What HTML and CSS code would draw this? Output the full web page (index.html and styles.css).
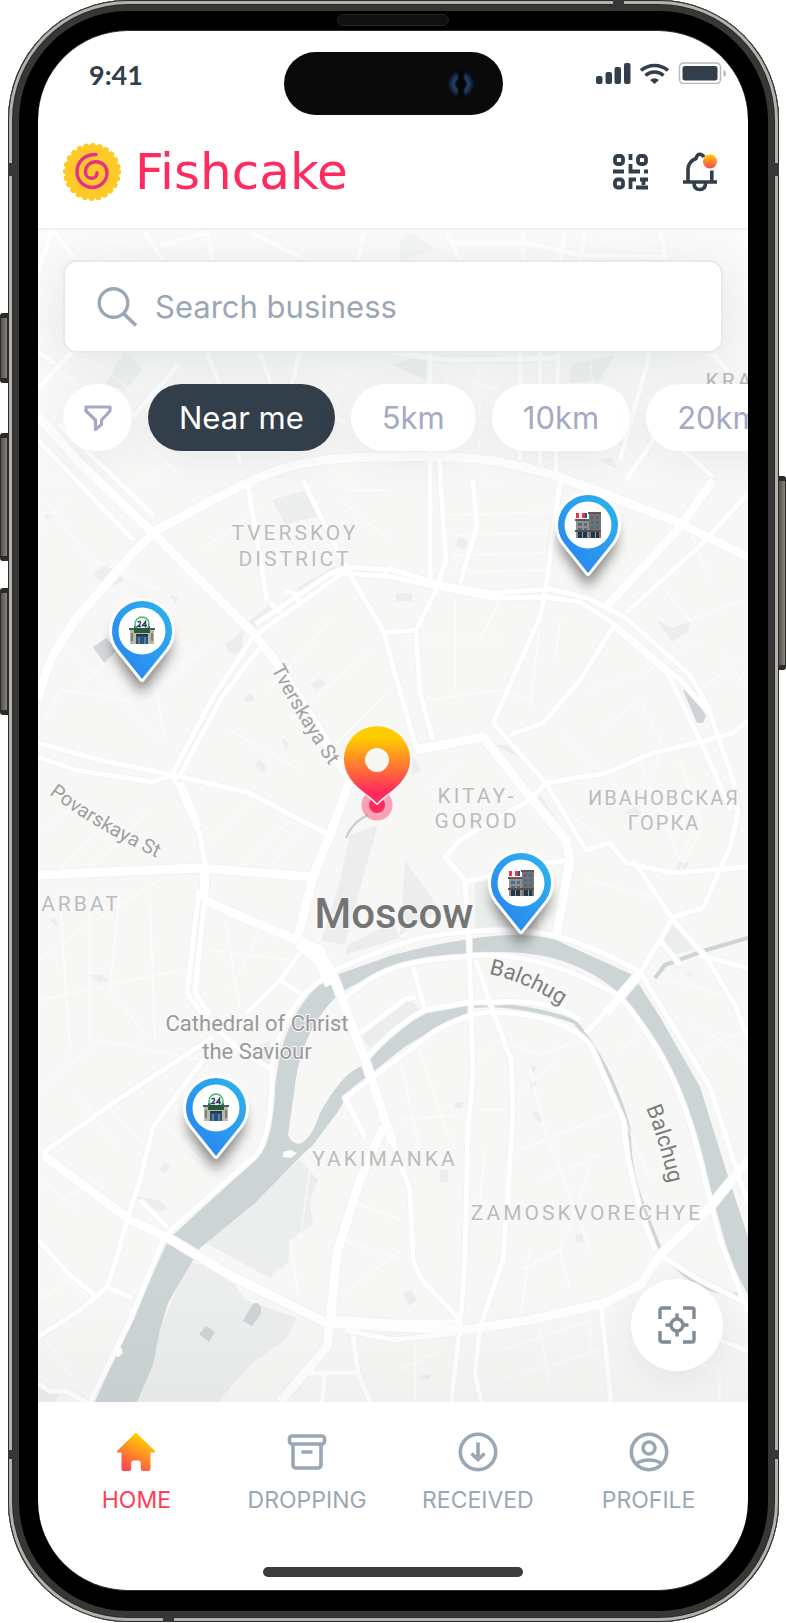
FILE: index.html
```html
<!DOCTYPE html>
<html lang="en">
<head>
<meta charset="utf-8">
<meta name="viewport" content="width=device-width, initial-scale=1">
<title>Fishcake</title>
<link rel="stylesheet" href="styles.css">
</head>
<body>
<svg class="defs" aria-hidden="true">
  <defs>
    <linearGradient id="blue" x1="1" y1="0.2" x2="0.3" y2="1"><stop offset="0" stop-color="#2bb0ee"/><stop offset="1" stop-color="#2a86f0"/></linearGradient>
    <linearGradient id="warm" x1="0" y1="0" x2="0" y2="1"><stop offset="0.15" stop-color="#ffcc00"/><stop offset="0.85" stop-color="#ff2b5e"/></linearGradient>
    <linearGradient id="warm-dot" x1="0" y1="0" x2="0" y2="1"><stop offset="0" stop-color="#ffcc00"/><stop offset="1" stop-color="#ff4458"/></linearGradient>
    <linearGradient id="warm-diagonal" x1="0.7" y1="0" x2="0.2" y2="1"><stop offset="0.1" stop-color="#ffcf00"/><stop offset="1" stop-color="#ff3d55"/></linearGradient>
    <linearGradient id="map-fade" x1="0" y1="0" x2="0" y2="1"><stop offset="0" stop-color="#fff" stop-opacity="0.5"/><stop offset="0.25" stop-color="#fff" stop-opacity="0"/><stop offset="0.9" stop-color="#000" stop-opacity="0"/><stop offset="1" stop-color="#000" stop-opacity="0.025"/></linearGradient>
    <filter id="soft" x="-50%" y="-50%" width="200%" height="200%"><feGaussianBlur stdDeviation="7"/></filter>
    <symbol id="pin" viewBox="0 0 76 110" overflow="visible">
      <path d="M38 98 14 64a28 28 0 1 1 48 0Z" fill="#000" opacity=".5" filter="url(#soft)"/>
      <path d="M38 84 14 54A30 30 0 1 1 62 54Z" fill="#fff" stroke="#fff" stroke-width="6" stroke-linejoin="round"/>
      <path d="M38 84 14 54A30 30 0 1 1 62 54Z" fill="url(#blue)"/>
      <circle cx="38" cy="36" r="23.5" fill="#fff"/>
    </symbol>
    <symbol id="hotel" viewBox="0 0 26 27">
      <path d="M1 8h13v19H1z" fill="#948e8c"/><path d="M14 1h12v26H14z" fill="#777170"/><path d="M13 1h13v2H13zM0 8h14v2H0z" fill="#5e5755"/>
      <path d="M1 2h3v5H1zM7 2h3v5H7z" fill="#ee3347"/><path d="M4 2h3v5H4z" fill="#e4edf8"/><path d="M10 2h2v5h-2z" fill="#294f9d"/>
      <path d="M3 12h4v3H3zM9 12h3v3H9zM3 17h4v2H3zM9 17h3v2H9zM16 5h3v3h-3zM21 5h3v3h-3zM16 10h3v3h-3zM21 10h3v3h-3zM16 15h3v3h-3zM21 15h3v3h-3z" fill="#456e88"/>
      <path d="M3 21h9v6H3zM16 21h8v6h-8z" fill="#233846"/><path d="M7 21h1v6H7zM20 21h1v6h-1z" fill="#78a6bd"/><path d="M0 19h26v2H0z" fill="#5c504e"/>
    </symbol>
    <symbol id="shop" viewBox="0 0 26 28">
      <path d="M5 16V11q1-3 3-4h10q2 1 3 4v5z" fill="#24583b"/><circle cx="13" cy="8" r="7" fill="#eef6f2" stroke="#43bb72" stroke-width="1.4"/>
      <path d="M8.500 6q3-1.500 3 .5T8.500 10.500h3.500M16.500 11.500V5.500L13.500 9.500H18" fill="none" stroke="#354062" stroke-width="1.400"/>
      <path d="M1 13h24v15H1z" fill="#b9b9a4"/><path d="M5 12h16v5H5z" fill="#255b3c"/><path d="M0 12h6v2H0zM20 12h6v2h-6z" fill="#4c5870"/>
      <path d="M7 20h12v8H7z" fill="#2c5079"/><path d="M7 18h12v2H7z" fill="#27335a"/><path d="M10 21v7M16 21v7" stroke="#6b94b0" stroke-width="1.4"/><path d="M3 17v8M23 17v8" stroke="#7c8180" stroke-width="2"/>
    </symbol>
  </defs>
</svg>

<div class="phone">
  <span class="side-key key-action"></span><span class="side-key key-up"></span><span class="side-key key-down"></span><span class="side-key key-power"></span>
  <span class="antenna ant-top"></span><span class="antenna ant-bottom"></span>
  <span class="antenna ant-side ant-lt"></span><span class="antenna ant-side ant-rt"></span><span class="antenna ant-side ant-lb"></span><span class="antenna ant-side ant-rb"></span>
  <span class="speaker"></span>

  <div class="screen">
    <div class="status">
      <time class="clock">9:41</time>
      <div class="island"><span class="camera"></span></div>
      <svg class="signals" viewBox="0 0 131 22" role="img" aria-label="Signal, Wi-Fi and battery">
        <g fill="#323e4a"><rect x="0" y="14" width="6.500" height="8" rx="2"/><rect x="9.500" y="10" width="6.500" height="12" rx="2"/><rect x="18.500" y="5" width="6.500" height="17" rx="2"/><rect x="28" y="1" width="6.500" height="21" rx="2"/></g>
        <g fill="none" stroke="#323e4a" stroke-width="3.600"><path d="M45 8.500a20.500 20.500 0 0 1 27 0"/><path d="M49.500 13.500a13.500 13.500 0 0 1 18 0"/></g><path d="M54 18a7 7 0 0 1 9 0l-4.500 4z" fill="#323e4a"/>
        <rect x="83.500" y="1" width="41" height="20.500" rx="4" fill="none" stroke="#b4b9bf" stroke-width="1.500"/><rect x="86.500" y="4" width="35" height="14.500" rx="2.500" fill="#323e4a"/><path d="M127.500 8c3.500 1 3.500 6 0 7z" fill="#b4b9bf"/>
      </svg>
    </div>

    <header class="header">
      <a class="brand" href="#">
        <svg class="logo" viewBox="0 0 60 60" aria-hidden="true"><circle cx="30" cy="30" r="27" fill="#ffca28"/><circle cx="30" cy="30" r="26.300" fill="none" stroke="#ffca28" stroke-width="5.600" stroke-linecap="round" stroke-dasharray="0.01 6.885"/><path d="M34 12.500C22 12.500 15 20 15 30a15.500 15.500 0 0 0 15 15.500C38 45.500 45 39 45 31c0-7-5-11.300-11-11.300S23.500 24 23.500 30c0 4 2.500 6.300 6 6.300S35 34 35 30.700" fill="none" stroke="#e4308a" stroke-width="3.400" stroke-linecap="round"/></svg>
        <span>Fishcake</span>
      </a>
      <div class="actions">
        <button class="icon-button" type="button" aria-label="Scan code"><svg width="36" height="36" viewBox="0 0 36 36" fill="none" stroke="#323e4a" stroke-width="3.800"><rect x="2" y="2" width="8" height="8" rx="2.500"/><rect x="25" y="2" width="8" height="8" rx="2.500"/><rect x="2" y="25.500" width="8" height="8" rx="2.500"/><path d="M17.500 0v6M17.500 10v7.500H27M0 17.500h11M31 17.500h4M17.500 35V25.500h5.500M27 25.500h8M30.500 27v4M23 33.500h12"/></svg></button>
        <button class="icon-button" type="button" aria-label="Notifications"><svg width="36" height="40" viewBox="0 0 36 40"><path d="M1 30h34M6 30V17Q6.500 9.500 14 6.500Q15 2.200 17.700 2.200T22 5M29.800 18.500V30M12 31c0 4 2 6.500 5.700 6.500S23.500 35 23.500 31" fill="none" stroke="#323e4a" stroke-width="3.600"/><circle cx="28" cy="9.500" r="7" fill="url(#warm-dot)"/></svg></button>
      </div>
    </header>

    <main class="map">
      <svg class="map-art" viewBox="38 230 710 1172" preserveAspectRatio="xMidYMid slice" role="img" aria-label="Map of central Moscow">
        <defs>
          <g id="road-l">
            <path d="M38 416 80 463 153 533 253 633 277 663 350 780"/>
            <path d="M38 700C46 665 55 650 75 620L133 553 157 530 207 503 253 480C300 458 345 457 393 457 460 455 500 458 560 477L680 523 748 557"/>
            <path d="M38 875 200 868 313 877M205 868 204 898M350 780 330 835 313 877 297 940M205 900 230 912 297 940 320 950 333 975 365 1060 393 1143M298 945 318 960 330 985"/>
            <path d="M43 1155 130 1220 167 1237 233 1277 327 1323 393 1327 465 1330 530 1320 605 1303 640 1285 660 1255 710 1207 748 1160"/>
            <path d="M383 1127 360 1180 337 1253 330 1323 327 1347 280 1402"/>
            <path d="M713 480 680 527 606 607M416 750 483 737 530 797 566 840 570 860 556 937M640 973 606 1013"/>
          </g>
          <g id="road-m">
            <path d="M173 773 213 697 253 637 343 573 393 577 436 587 493 598 546 597 580 602 613 623 680 680 710 713 733 780 738 813 730 847 703 908 673 917 660 940 640 973 586 1033"/>
            <path d="M180 775 222 697 262 645M256 624 330 574 347 567 393 570 440 584 493 593 550 589 588 598 626 618 690 675 710 710M613 626 668 674 700 740 720 785 731 810"/>
            <path d="M38 743 100 760 173 775 250 793 287 813 330 835M38 757 75 770 153 782 173 775M173 775 200 835 206 868M181 782 200 826M199 890 187 993 207 1020 240 1050 272 1070M205 895 195 993 210 1015"/>
            <path d="M430 440V580M438 440 446 560 436 590 416 630 420 693 433 740M473 480 477 527 460 583M560 480 546 587 540 617 493 723M613 627 580 680 543 723 510 735M393 667 416 747M393 567 383 573"/>
            <path d="M493 723 546 783 586 850 610 843 626 863 673 873 748 867M530 800 546 783 606 773 653 753 700 742 733 733 748 720M530 800 460 840 445 857 465 880 468 940M748 493 706 540 626 613"/>
            <path d="M465 882 520 868 566 860M633 860 673 920 706 957 736 1007 748 1040M660 940 680 965M700 955 748 968M247 480 267 600M303 480 347 570 383 630 393 667M383 633 416 630M270 602 280 613M285 592Q297 590 299 602"/>
            <path d="M333 971C370 955 410 935 463 932 520 928 556 925 640 972L710 1087 740 1180 748 1202M272 1070Q272 1142 253 1158L173 1228 163 1240 130 1320 90 1402M340 1003C375 968 410 960 463 957 500 951 560 960 620 997C660 1045 685 1090 705 1180L720 1240 748 1312M272 1070C278 1030 290 1000 325 977"/>
            <path d="M367 1057C385 1038 405 1020 425 1010L470 1002H493C530 1000 560 1005 580 1020M360 1033 405 999 416 997M413 967 425 1010M365 1137 345 1098 373 1077 407 1052 437 1030Q470 1013 490 1012C550 1013 580 1030 592 1048L623 1120 628 1160 640 1210 655 1250M300 953 280 980 247 1013M280 980 303 995"/>
            <path d="M469 935 471 1017 473 1073 468 1127 465 1260 460 1327 451 1402M476 960 490 1003 511 1060 513 1110 508 1193 503 1260 480 1327 475 1373 481 1402M601 1303 611 1402"/>
            <path d="M393 1143 410 1190 413 1260 422 1280 460 1320M213 1037 113 1103 43 1153M203 1060 153 1127 140 1180 127 1220 117 1257 107 1287 80 1310 38 1337M38 1240 70 1275 97 1297M107 1287 132 1298M140 1200 168 1228"/>
            <path d="M38 1383 50 1391 65 1391 90 1404M310 1373H358M353 1335 358 1373 370 1402M332 1318 393 1322 460 1322M345 1330 393 1340 455 1333M325 1373 322 1402M720 1340 750 1352M660 1255 700 1280 730 1295 748 1305"/>
            <path d="M38 388 72 352M38 352 55 364M143 230 163 260M207 353 222 390 240 463M260 353 275 395M133 417 178 365M520 353V460M540 353V465M558 353 556 480M650 353 620 460M660 430 626 480M683 450 713 477M712 353 728 371M38 270 53 230 74 258M160 246 208 232 212 260M250 232 310 262M365 230 357 262M446 230 460 260M523 230V260M565 230 560 260M585 230 580 260M453 243H526L580 255 666 257 660 230M430 457V353M393 353 450 360 560 358M300 353 290 390M38 440 133 540M60 425 153 515"/>
          </g>
          <g id="road-s">
            <path d="M75 345 190 440M60 370 180 475M90 480 130 430M45 500 90 560M65 500 40 530M160 530 240 480M95 560 160 590M120 590 200 660M60 640 160 740M75 690 130 640 155 680 165 740M150 700 210 640M45 720 60 690 130 700M200 550 260 510M180 570 240 620M300 520 345 560M345 490H393M340 500 365 520 390 540M270 690 330 620M290 720 370 650M320 760 390 690M230 730 300 770M205 850 250 800M240 868 290 820M270 868 300 830M45 830 80 800M60 868 110 820M90 868 150 810"/>
            <path d="M40 960 80 930 160 880M60 900 65 980 70 1050M90 900V1040M120 890 110 990 150 1040M150 900 155 1040M40 1000 180 970M40 1090 100 1040 200 1060M210 950 290 960M225 920 240 1010M260 930 230 990M75 1090 120 1150M110 1110 150 1150M160 1120 200 1160M170 1100 230 1170M40 1180 80 1210M60 1200 100 1180M50 1260 90 1300M40 1300 70 1280M45 1340 90 1400"/>
            <path d="M450 515 550 512M455 535 548 533M452 555 545 553M455 572 545 570M400 640H500M455 600V690M430 700 500 690 530 700M480 640 500 600M540 620 530 710M560 620 555 660M590 690 650 670 700 640M640 560 690 620 745 600M690 530 710 580M600 730 640 700 660 740 655 770M560 730 600 770M700 690 740 660M720 650 748 690M430 790 460 760M550 800 620 850M610 780 660 830M640 760 680 860M680 760 700 820 680 860M590 880 660 900M700 830 680 870"/>
            <path d="M400 1060 420 1150M420 1050 450 1140M480 1060 500 1040 540 1055 580 1040M520 1090 560 1060M530 1070 545 1130 590 1250M520 1150 620 1110M540 1180 600 1155M560 1250 590 1170M600 1060 650 1180M620 1050 650 1030M670 980 740 1000M690 1020 748 1060M700 1050 748 1030M480 1110H505M485 1150 480 1200M400 1120 460 1115M520 1270 560 1250 570 1290M530 1250 520 1320M500 1350 590 1320 590 1360M540 1330 550 1390M500 1380 600 1350M620 1340 720 1370V1402M400 1370 440 1350M415 1340V1400M350 1200 400 1220M340 1240 400 1260M350 1290 400 1250M290 1240 300 1310M310 1170 300 1240"/>
            <path d="M440 370 500 390M430 390 520 405M450 420 520 425M450 360 440 440M480 360V450M570 400 620 410M590 360 600 440M640 470 690 440M650 240 740 260M600 240 640 235M80 240 110 260M100 230 120 262M340 370 380 400 420 380M300 400 380 440M150 480 170 460M330 435 340 390"/>
          </g>
        </defs>
        <rect x="38" y="230" width="710" height="1172" fill="#f7f7f6"/>
        <g fill="#ebeeed">
          <path d="M300 1160 318 1180 310 1200 313 1225 290 1240 288 1262 270 1278 200 1240ZM188 1262 225 1270 245 1300 297 1318 285 1340 250 1365 218 1402H137L160 1330Z"/>
          <path d="M272 500 305 490 322 515 285 525ZM247 622 272 603 276 610 255 627ZM297 588 335 566 343 572 305 592ZM225 645 245 628 240 655 228 652ZM350 835 378 825 365 870 345 945 322 940 340 880ZM400 938 345 955 348 945 393 922ZM475 882 520 868 540 930 475 932ZM405 860 440 910 400 935ZM412 755 422 770 412 775ZM494 745 515 745 520 758ZM540 795 560 825 575 855 567 838 530 805ZM662 938 675 920 700 948 672 955ZM360 1035 410 998 420 1010 370 1048ZM252 1050 270 1040 270 1068ZM105 385 125 350 143 370 125 390ZM400 240 412 232 435 250 400 260ZM393 365 435 350 425 380ZM570 365 615 355 600 380 570 383ZM92 575 107 563 119 575 125 580 110 587ZM657 620 672 628 690 622 688 632 672 642ZM130 1195 158 1200 168 1208 160 1212ZM38 1380 50 1388 62 1390 55 1402H38Z"/>
        </g>
        <g fill="#eceeed"><path d="M45 515h10l-8 8zM170 595l9 3-4 6zM310 684l10-6 6 6-10 6zM255 765l4-6 9 9-4 5zM282 738l8 6-5 6zM243 698l8-5 4 7-8 3zM600 460l12-3 5 12-12-6zM458 537l10 3-4 10-8-4zM396 593h16v8h-16zM625 812l14-7 3 8-13 3zM677 862h12l-3 8h-9zM90 975h10l8 5-10 2zM145 975l10 3zM50 920l5-2 4 10zM150 1048l9 2zM158 1170l8-8 4 5-5 6zM530 1065l8 2-5 6zM530 1080l8 2-6 7zM532 1112l8 1 4 10-7-2zM455 1102h8v6h-8zM440 1170h8v12h-8zM575 1235l7-2 2 9-7 1zM403 1293l9-3 5 10-8 6zM420 1375h10v4h-10zM685 975l7-3v6zM310 585l10 6-9 4z"/></g>
        <path d="M95 1402 130 1322 167 1243 173 1235 253 1162Q266 1148 268 1130L277 1073Q283 1020 320 983L333 976 393 955Q430 945 463 940 520 930 556 940L633 975 660 1017 700 1087 726 1170 748 1237V1295L730 1260 708 1180Q690 1105 660 1047L623 997Q595 970 553 958 510 948 463 955C400 962 370 975 340 993Q300 1030 294 1093L288 1135Q292 1146 302 1143Q312 1137 320 1113C333 1090 345 1074 358 1068L370 1060Q385 1041 403 1026L427 1013 470 1003V1012L437 1027 403 1048 373 1072 353 1087 337 1113 313 1145 302 1155 255 1203 200 1248 168 1303 160 1330 153 1365 137 1402Z" fill="#cdd4d6"/>
        <path d="M466 1007C500 1001 550 1012 575 1022 600 1050 620 1095 629 1130 628 1180 645 1210 660 1250L672 1263Q700 1292 738 1295M748 938 706 950 665 965 655 978" fill="none" stroke="#cdd4d6" stroke-width="4"/>
        <g fill="#cdd4d6"><path d="M243 1321 252 1305Q258 1300 261 1308V1314L252 1326ZM199 1334 206 1326 215 1332 209 1342ZM683 690 692 693 706 716 703 723H697ZM677 678h6l-1 6z"/><path d="M93 647 106 638 118 650 105 664Z" opacity=".85"/></g>
        <path d="M346 838Q352 822 368 815" fill="none" stroke="#c4cdcf" stroke-width="2"/>
        <use href="#road-s" class="road fine"/>
        <use href="#road-m" class="road mid-edge"/><use href="#road-l" class="road large-edge"/>
        <use href="#road-m" class="road mid"/><use href="#road-l" class="road large"/>
        <path d="M283 1152l7-2 7 3-6 5-8-1zM114 1350l7-3 2 6-4 4-4-1z" fill="#fff"/>
        <rect x="38" y="230" width="710" height="1172" fill="url(#map-fade)"/>
        <g class="district" text-anchor="middle">
          <text x="295" y="540">TVERSKOY</text><text x="295" y="566">DISTRICT</text>
          <text x="477" y="803">KITAY-</text><text x="477" y="828">GOROD</text>
          <text x="81" y="911">ARBAT</text><text x="385" y="1166">YAKIMANKA</text><text x="587" y="1220">ZAMOSKVORECHYE</text>
          <text x="730" y="388">KRA</text>
        </g>
        <g class="district compact" text-anchor="middle"><text x="664" y="805">ИВАНОВСКАЯ</text><text x="664" y="830">ГОРКА</text></g>
        <g class="place" text-anchor="middle"><text x="257" y="1031">Cathedral of Christ</text><text x="257" y="1059">the Saviour</text></g>
        <text class="city" x="394" y="928" text-anchor="middle">Moscow</text>
        <path id="s1" d="M271 669 Q302 728 345 788" fill="none"/><path id="s2" d="M49 794 Q95 830 170 864" fill="none"/><path id="s3" d="M489 974 Q530 982 580 1018" fill="none"/><path id="s4" d="M646 1108 Q658 1135 674 1205" fill="none"/>
        <g class="street"><text><textPath href="#s1">Tverskaya St</textPath></text><text><textPath href="#s2">Povarskaya St</textPath></text></g>
        <g class="street dark"><text><textPath href="#s3">Balchug</textPath></text><text><textPath href="#s4">Balchug</textPath></text></g>
      </svg>

      <button class="pin pin-a" type="button" aria-label="Shop"><svg viewBox="0 0 76 110"><use href="#pin"/><use href="#shop" x="25" y="21" width="26" height="28"/></svg></button>
      <button class="pin pin-b" type="button" aria-label="Hotel"><svg viewBox="0 0 76 110"><use href="#pin"/><use href="#hotel" x="25" y="22" width="26" height="27"/></svg></button>
      <button class="pin pin-c" type="button" aria-label="Hotel"><svg viewBox="0 0 76 110"><use href="#pin"/><use href="#hotel" x="25" y="22" width="26" height="27"/></svg></button>
      <button class="pin pin-d" type="button" aria-label="Shop"><svg viewBox="0 0 76 110"><use href="#pin"/><use href="#shop" x="25" y="21" width="26" height="28"/></svg></button>
      <div class="pin pin-me"><svg viewBox="0 0 76 110"><circle cx="38" cy="81" r="15.500" fill="#ff2b5e" opacity=".42"/><circle cx="38" cy="81" r="8" fill="#ff2b5e"/><path d="M16 60 38 80 60 60" fill="none" stroke="#fff" stroke-width="2"/><path d="M38 79.500C30 70 16 65 8 49A33 33 0 1 1 68 49C60 65 46 70 38 79.500Z" fill="url(#warm)"/><circle cx="38" cy="36" r="12" fill="#f7f7f6"/></svg></div>

      <div class="controls">
        <form class="search" role="search">
          <svg width="40" height="40" viewBox="0 0 40 40" aria-hidden="true"><path d="M26.500 26.500 39 38.500" stroke="#9aa7b5" stroke-width="3.600"/><circle cx="16.500" cy="16" r="14.300" fill="none" stroke="#9aa7b5" stroke-width="3.400"/></svg>
          <input type="search" aria-label="Search business" placeholder="Search business">
        </form>
        <div class="chips">
          <button class="chip filter" type="button" aria-label="Filter"><svg width="28" height="28" viewBox="0 0 28 28"><path d="M2 3H26V7L17.500 16V20.500L11.500 25.500V16L2 7Z" fill="none" stroke="#a5a9c3" stroke-width="3.200" stroke-linejoin="round"/></svg></button>
          <button class="chip active" type="button" aria-pressed="true">Near me</button>
          <button class="chip" type="button">5km</button>
          <button class="chip" type="button">10km</button>
          <button class="chip" type="button">20km</button>
        </div>
      </div>
      <button class="locate" type="button" aria-label="Centre on my location"><svg width="40" height="40" viewBox="0 0 40 40" fill="none" stroke="#7f8b96" stroke-width="3.400"><path d="M3 14V5a2 2 0 0 1 2-2h9M26 3h9a2 2 0 0 1 2 2v9M37 26v9a2 2 0 0 1-2 2h-9M14 37H5a2 2 0 0 1-2-2v-9M20 8.500v6M20 25.500v6M8.500 20h6M25.500 20h6"/><circle cx="20" cy="20" r="6"/></svg></button>
    </main>

    <nav class="tabs" aria-label="Main">
      <a class="tab current" href="#" aria-current="page"><svg width="40" height="40" viewBox="0 0 40 40"><path d="M20 .5 39 19v1.500H34.500V36.500Q34.500 39 32 39H27Q24.800 39 24.800 36.500V31Q24.800 28.500 22.500 28.500H17.500Q15.200 28.500 15.200 31V36.500Q15.200 39 13 39H8Q5.500 39 5.500 36.500V20.500H1V19Z" fill="url(#warm-diagonal)"/></svg>HOME</a>
      <a class="tab" href="#"><svg width="40" height="40" viewBox="0 0 40 40" fill="none" stroke="#9aa7b5" stroke-width="3.600"><rect x="2.500" y="4" width="35" height="8" rx="2.500"/><path d="M6 12V33a3 3 0 0 0 3 3H31a3 3 0 0 0 3-3V12M14.500 20h11"/></svg>DROPPING</a>
      <a class="tab" href="#"><svg width="40" height="40" viewBox="0 0 40 40" fill="none" stroke="#9aa7b5" stroke-width="3.600"><circle cx="20" cy="20" r="17.700"/><path d="M20 10.500V28M13.500 21.500 20 27.500 26.500 21.500"/></svg>RECEIVED</a>
      <a class="tab" href="#"><svg width="40" height="40" viewBox="0 0 40 40" fill="none" stroke="#9aa7b5" stroke-width="3.600"><circle cx="20" cy="20" r="17.700"/><circle cx="20" cy="16" r="6"/><path d="M7.500 31.500Q12.500 28 20 28T32.500 31.500"/></svg>PROFILE</a>
    </nav>
    <div class="home-bar"></div>
  </div>
</div>
</body>
</html>
```
FILE: styles.css
```css
* { box-sizing: border-box; }
body { margin: 0; background: #fff; font-family: Inter, "Liberation Sans", sans-serif; color: #323e4a; }
button { border: 0; padding: 0; margin: 0; background: none; font: inherit; color: inherit; cursor: pointer; }
a { color: inherit; text-decoration: none; }
svg { display: block; }
.defs { position: absolute; width: 0; height: 0; }

/* Device frame */
.phone {
  position: relative;
  margin: 0 7px 0 8px;
  padding: 30px 31px 31px 30px;
  border-radius: 120px;
  background: #000;
  box-shadow: inset 0 0 0 1px #2c2b29, inset 0 0 0 4px #b4b2ad, inset 0 0 0 5px #2c2b29, inset 0 0 0 11px #393735;
}
.side-key { position: absolute; left: -8px; width: 8px; border: solid #2b2a26; border-width: 5px 1px; border-radius: 3px 0 0 3px; background: linear-gradient(90deg, #55534c, #85837b); }
.key-action { top: 313px; height: 70px; }
.key-up { top: 433px; height: 128px; }
.key-down { top: 588px; height: 127px; }
.key-power { top: 476px; left: auto; right: -7px; height: 194px; border-radius: 0 3px 3px 0; }
.antenna { position: absolute; width: 11px; height: 10px; background: #393735; }
.ant-top { top: 0; left: 605px; }
.ant-bottom { bottom: 0; left: 155px; }
.ant-side { height: 13px; }
.ant-lt { top: 163px; left: 0; }
.ant-rt { top: 163px; right: 0; }
.ant-lb { bottom: 163px; left: 0; height: 9px; }
.ant-rb { bottom: 163px; right: 0; height: 9px; }
.speaker { position: absolute; top: 14px; left: 50%; width: 112px; height: 12px; margin-left: -57px; border: 1px solid #242424; border-radius: 6px; background: #111; }
.screen { display: flex; flex-direction: column; overflow: hidden; border: solid #2d2d2d; border-width: 1px 0; border-radius: 90px; background: #fff; }

/* Status bar */
.status { display: grid; grid-template-columns: 1fr 219px 1fr; padding: 21px 21px 0 51px; }
.clock { font: 700 27px/46px Lato, sans-serif; }
.island { display: flex; align-items: center; justify-content: flex-end; height: 63px; margin-left: -15px; margin-right: 15px; padding-right: 28px; border-radius: 32px; background: #0a0a0a; }
.camera { width: 28px; height: 28px; border-radius: 50%; background: linear-gradient(90deg, transparent 10px, #050505 12px, #050505 16px, transparent 18px), radial-gradient(circle, #000 0 4px, #26446a 7px, #172b4a 10px, #0a0e18 13px); }
.signals { justify-self: end; width: 131px; height: 22px; margin-top: 10px; }

/* Header */
.header { display: flex; align-items: center; justify-content: space-between; height: 115px; padding: 0 30px 0 24px; border-bottom: 2px solid #f0f1f2; }
.brand { display: flex; align-items: center; gap: 13px; color: #ff2b5e; font: 50px/60px "DejaVu Sans", sans-serif; }
.logo { width: 60px; height: 60px; }
.actions { display: flex; align-items: center; gap: 33px; }
.icon-button { display: block; }

/* Map */
.map { position: relative; display: grid; overflow: hidden; }
.map > .map-art, .map > .controls, .map > .locate { grid-area: 1 / 1; }
.map-art { width: 100%; aspect-ratio: 710 / 1172; }
.road { fill: none; stroke: #fff; stroke-linejoin: round; }
.fine { stroke-width: 2px; opacity: 0.5; }
.mid { stroke-width: 5px; }
.mid-edge { stroke-width: 7px; stroke: #f1f3f3; }
.large { stroke-width: 9px; }
.large-edge { stroke-width: 11px; stroke: #f1f3f3; }
.map-art text { font-family: Roboto, "Liberation Sans", sans-serif; font-size: 22px; paint-order: stroke; stroke: #f9f9f9; stroke-width: 2px; }
.map-art .district text { font-size: 21px; fill: #bcbcbc; letter-spacing: 3px; }
.map-art .compact text { font-size: 20px; letter-spacing: 2px; }
.map-art .place { fill: #989898; }
.map-art .street { fill: #a0a0a0; }
.map-art .street text { font-size: 20px; }
.map-art .street.dark { fill: #7c7c7c; }
.map-art .street.dark text { font-size: 22px; }
.map-art .city { font-size: 42px; font-weight: 500; fill: #757575; }

.pin { position: absolute; width: 76px; height: 110px; margin: -36px 0 0 -38px; }
.pin svg { width: 76px; height: 110px; overflow: visible; }
.pin-a { left: 14.7%; top: 34.2%; }
.pin-b { left: 77.4%; top: 25.2%; }
.pin-c { left: 68%; top: 55.7%; }
.pin-d { left: 25.1%; top: 74.9%; }
.pin-me { left: 47.7%; top: 45.2%; }

.controls { z-index: 1; align-self: start; display: grid; gap: 31px; min-width: 0; padding: 30px 25px 0; }
.search { display: flex; align-items: center; gap: 18px; height: 93px; padding: 0 32px; border: 2px solid #e6eaef; border-radius: 14px; background: #fff; box-shadow: 0 8px 50px rgba(50, 70, 80, 0.12); }
.search svg { flex: none; }
.search input { flex: 1; min-width: 0; padding: 0; border: 0; outline: 0; background: none; font: 31px/40px Inter, sans-serif; color: #323e4a; }
.search input::placeholder { color: #9aa7b5; opacity: 1; }
.chips { display: flex; gap: 16px; min-width: 0; }
.chip { flex: none; height: 67px; padding: 0 31px; border-radius: 34px; background: #fff; color: #a5a9c3; font-size: 31px; box-shadow: 0 8px 40px rgba(50, 70, 80, 0.08); }
.chip.active { background: #323e4a; color: #fff; }
.chip.filter { display: grid; place-items: center; width: 69px; padding: 0; }
.locate { z-index: 1; place-self: end; display: grid; place-items: center; width: 92px; height: 92px; margin: 0 25px 31px; border-radius: 50%; background: #fff; box-shadow: 0 6px 30px rgba(50, 70, 80, 0.08); }

/* Bottom tabs */
.tabs { display: grid; grid-template-columns: repeat(4, 1fr); padding: 30px 14px 0 13px; }
.tab { display: flex; flex-direction: column; align-items: center; gap: 14px; color: #9aa7b5; font-size: 23px; line-height: 28px; }
.tab.current { color: #ff3d55; }
.home-bar { width: 260px; height: 10px; margin: 53px auto 13px; border-radius: 5px; background: #3c3c3c; }
```
